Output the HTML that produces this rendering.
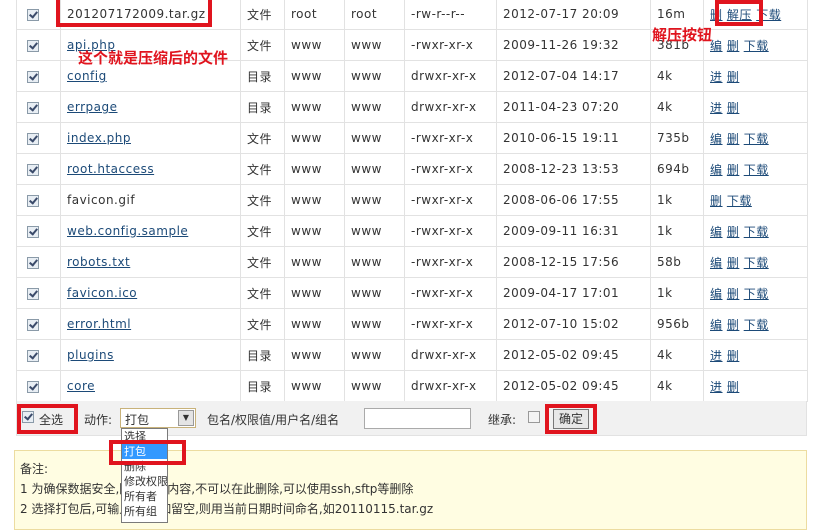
<!DOCTYPE html><html><head><meta charset="utf-8"><style>
*{margin:0;padding:0;box-sizing:border-box}
body{width:817px;height:519px;background:#fff;position:relative;overflow:hidden;font-family:"DejaVu Sans","Noto Sans CJK SC",sans-serif;font-size:12px;color:#333}
table{position:absolute;left:16px;top:-2px;border-collapse:collapse;table-layout:fixed}
td{border:1px solid #e2e2e2;height:31px;padding:0 0 0 6px;white-space:nowrap;letter-spacing:.5px}
a{color:#1c4a78;text-decoration:underline}
.cb{display:inline-block;width:12px;height:12px;border:1px solid #8a9aa8;background:#e8eef4;margin-left:4px;vertical-align:middle;position:relative}
.cb:after{content:"";position:absolute;left:3px;top:0px;width:3px;height:6px;border:solid #3a4a6a;border-width:0 2px 2px 0;transform:rotate(40deg)}
.abs{position:absolute}
.red{position:absolute;border:4px solid #e0141e}
.cn{font-family:"Noto Sans CJK SC",sans-serif}
</style></head><body>
<table>
<colgroup><col style="width:44px"><col style="width:180px"><col style="width:44px"><col style="width:60px"><col style="width:60px"><col style="width:92px"><col style="width:154px"><col style="width:53px"><col style="width:104px"></colgroup>
<tr><td><span class="cb"></span></td><td>201207172009.tar.gz</td><td>文件</td><td>root</td><td>root</td><td>-rw-r--r--</td><td>2012-07-17 20:09</td><td>16m</td><td><a>删</a> <a>解压</a> <a>下载</a></td></tr>
<tr><td><span class="cb"></span></td><td><a>api.php</a></td><td>文件</td><td>www</td><td>www</td><td>-rwxr-xr-x</td><td>2009-11-26 19:32</td><td>381b</td><td><a>编</a> <a>删</a> <a>下载</a></td></tr>
<tr><td><span class="cb"></span></td><td><a>config</a></td><td>目录</td><td>www</td><td>www</td><td>drwxr-xr-x</td><td>2012-07-04 14:17</td><td>4k</td><td><a>进</a> <a>删</a></td></tr>
<tr><td><span class="cb"></span></td><td><a>errpage</a></td><td>目录</td><td>www</td><td>www</td><td>drwxr-xr-x</td><td>2011-04-23 07:20</td><td>4k</td><td><a>进</a> <a>删</a></td></tr>
<tr><td><span class="cb"></span></td><td><a>index.php</a></td><td>文件</td><td>www</td><td>www</td><td>-rwxr-xr-x</td><td>2010-06-15 19:11</td><td>735b</td><td><a>编</a> <a>删</a> <a>下载</a></td></tr>
<tr><td><span class="cb"></span></td><td><a>root.htaccess</a></td><td>文件</td><td>www</td><td>www</td><td>-rwxr-xr-x</td><td>2008-12-23 13:53</td><td>694b</td><td><a>编</a> <a>删</a> <a>下载</a></td></tr>
<tr><td><span class="cb"></span></td><td>favicon.gif</td><td>文件</td><td>www</td><td>www</td><td>-rwxr-xr-x</td><td>2008-06-06 17:55</td><td>1k</td><td><a>删</a> <a>下载</a></td></tr>
<tr><td><span class="cb"></span></td><td><a>web.config.sample</a></td><td>文件</td><td>www</td><td>www</td><td>-rwxr-xr-x</td><td>2009-09-11 16:31</td><td>1k</td><td><a>编</a> <a>删</a> <a>下载</a></td></tr>
<tr><td><span class="cb"></span></td><td><a>robots.txt</a></td><td>文件</td><td>www</td><td>www</td><td>-rwxr-xr-x</td><td>2008-12-15 17:56</td><td>58b</td><td><a>编</a> <a>删</a> <a>下载</a></td></tr>
<tr><td><span class="cb"></span></td><td><a>favicon.ico</a></td><td>文件</td><td>www</td><td>www</td><td>-rwxr-xr-x</td><td>2009-04-17 17:01</td><td>1k</td><td><a>编</a> <a>删</a> <a>下载</a></td></tr>
<tr><td><span class="cb"></span></td><td><a>error.html</a></td><td>文件</td><td>www</td><td>www</td><td>-rwxr-xr-x</td><td>2012-07-10 15:02</td><td>956b</td><td><a>编</a> <a>删</a> <a>下载</a></td></tr>
<tr><td><span class="cb"></span></td><td><a>plugins</a></td><td>目录</td><td>www</td><td>www</td><td>drwxr-xr-x</td><td>2012-05-02 09:45</td><td>4k</td><td><a>进</a> <a>删</a></td></tr>
<tr><td><span class="cb"></span></td><td><a>core</a></td><td>目录</td><td>www</td><td>www</td><td>drwxr-xr-x</td><td>2012-05-02 09:45</td><td>4k</td><td><a>进</a> <a>删</a></td></tr>
</table>
<div class="red" style="left:56px;top:-4px;width:156px;height:31px"></div>
<div class="red" style="left:715px;top:0;width:48px;height:26px"></div>
<div class="abs cn" style="left:78px;top:47px;color:#e0141e;font-weight:bold;font-size:15px">这个就是压缩后的文件</div>
<div class="abs cn" style="left:652px;top:24px;color:#e0141e;font-weight:bold;font-size:15px">解压按钮</div>
<!-- toolbar -->
<div class="abs" style="left:16px;top:401px;width:791px;height:35px;background:#f1f1f1;border:1px solid #e2e2e2;border-top:none"></div>
<div class="red" style="left:17px;top:404px;width:61px;height:30px"></div>
<span class="cb abs" style="left:22px;top:411px;margin:0"></span>
<div class="abs" style="left:39px;top:411px">全选</div>
<div class="abs" style="left:84px;top:411px">动作:</div>
<div class="abs" style="left:120px;top:408px;width:76px;height:20px;border:1px solid #c8b27a;background:#fff;padding:2px 4px">打包</div>
<div class="abs" style="left:178px;top:410px;width:16px;height:16px;background:#e4e4e4;border:1px solid #999;font-size:8px;text-align:center;line-height:14px">▼</div>
<div class="abs" style="left:207px;top:411px">包名/权限值/用户名/组名</div>
<div class="abs" style="left:364px;top:408px;width:107px;height:21px;border:1px solid #aaa;background:#fff"></div>
<div class="abs" style="left:488px;top:411px">继承:</div>
<div class="abs" style="left:528px;top:411px;width:12px;height:12px;border:1px solid #999;background:#f4f4f4"></div>
<div class="red" style="left:545px;top:404px;width:52px;height:30px"></div>
<div class="abs" style="left:553px;top:409px;width:36px;height:20px;border:1px solid #777;background:#e8e8e8;text-align:center;line-height:18px">确定</div>
<!-- note -->
<div class="abs" style="left:14px;top:450px;width:793px;height:80px;background:#fffde2;border:1px solid #ecdca0"></div>
<div class="abs" style="left:20px;top:459px;line-height:20px;font-size:12px">备注:<br>1 为确保数据安全,回收站的内容,不可以在此删除,可以使用ssh,sftp等删除<br>2 选择打包后,可输入包名,如留空,则用当前日期时间命名,如20110115.tar.gz</div>
<!-- dropdown list -->
<div class="abs cn" style="left:121px;top:428px;width:47px;height:95px;background:#fff;border:1px solid #7a7a7a;line-height:15px;font-size:11px;white-space:nowrap;overflow:hidden">
<div style="padding-left:2px">选择</div>
<div style="padding-left:2px;background:#3399ff;color:#fff">打包</div>
<div style="padding-left:2px">删除</div>
<div style="padding-left:2px">修改权限</div>
<div style="padding-left:2px">所有者</div>
<div style="padding-left:2px">所有组</div>
</div>
<div class="red" style="left:109px;top:440px;width:77px;height:25px"></div>
</body></html>
